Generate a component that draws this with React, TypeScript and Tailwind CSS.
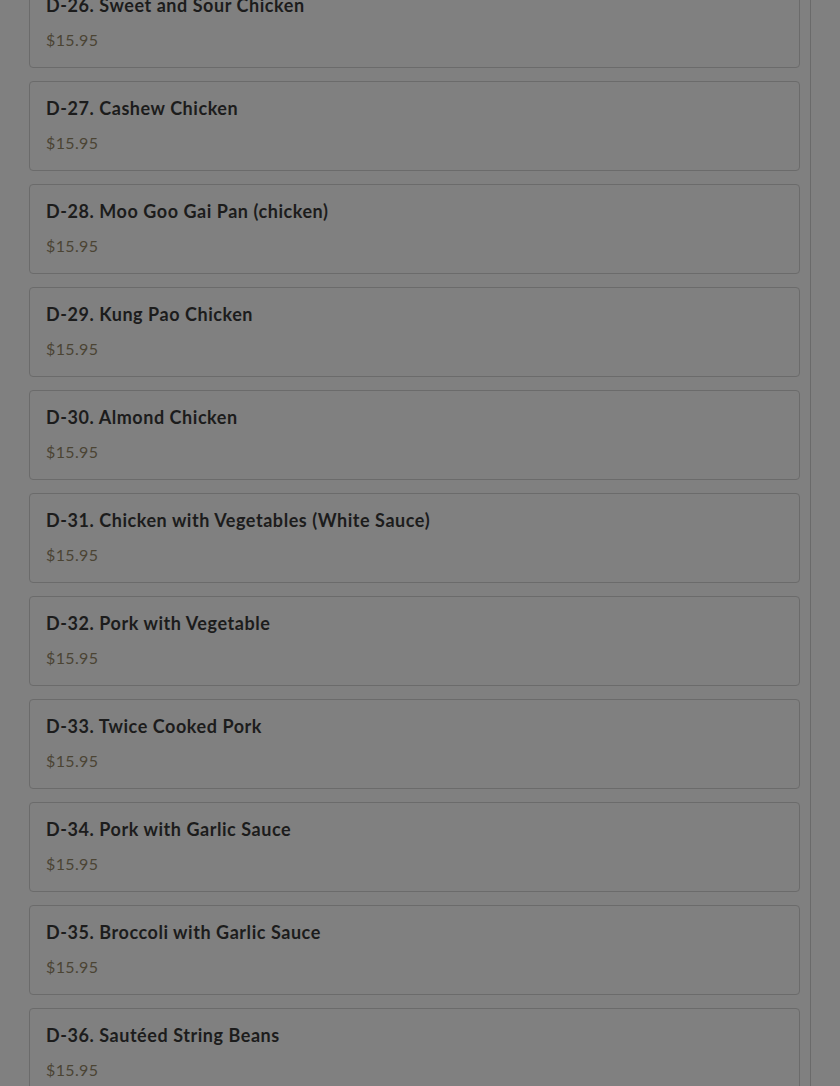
import React from "react";

const items: [string, string][] = [
  ["D-26.", "Sweet and Sour Chicken"],
  ["D-27.", "Cashew Chicken"],
  ["D-28.", "Moo Goo Gai Pan (chicken)"],
  ["D-29.", "Kung Pao Chicken"],
  ["D-30.", "Almond Chicken"],
  ["D-31.", "Chicken with Vegetables (White Sauce)"],
  ["D-32.", "Pork with Vegetable"],
  ["D-33.", "Twice Cooked Pork"],
  ["D-34.", "Pork with Garlic Sauce"],
  ["D-35.", "Broccoli with Garlic Sauce"],
  ["D-36.", "Sautéed String Beans"],
];

export default function App() {
  return (
    <div
      className="w-[840px] h-[1086px] overflow-hidden bg-[#808080] flex"
      style={{ fontFamily: "Lato, 'Open Sans', sans-serif" }}
    >
      <div className="w-[811px] border-r border-[#6a6a6a] pl-[29px] pr-[10px]">
        <div className="-mt-[22px] flex flex-col gap-[13px]">
          {items.map(([code, name]) => (
            <div
              key={code}
              className="h-[90px] rounded-[4px] border border-[#6b6b6b] bg-[#808080] pl-[16px] pt-[14px]"
            >
              <div className="text-[18px] leading-[24px] font-bold text-[#1c1c1c] tracking-[0.55px]">
                {code} {name}
              </div>
              <div className="mt-[13px] text-[16px] leading-[20px] text-[#4b4434] tracking-[0.35px]">$15.95</div>
            </div>
          ))}
        </div>
      </div>
      <div className="flex-1" />
    </div>
  );
}
